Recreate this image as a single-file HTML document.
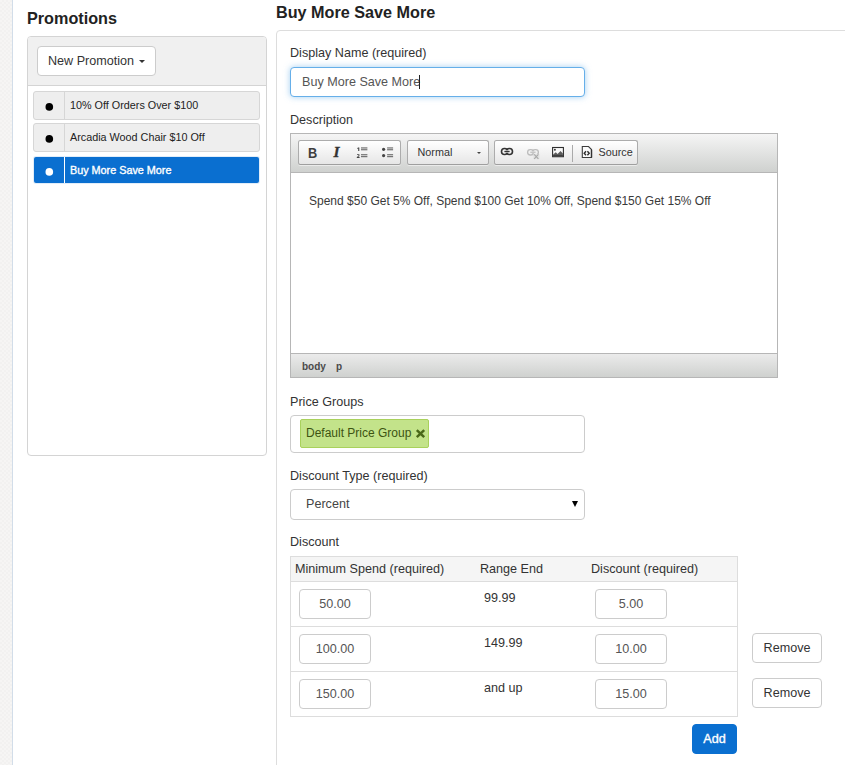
<!DOCTYPE html>
<html>
<head>
<meta charset="utf-8">
<title>Promotions</title>
<style>
*{box-sizing:border-box;margin:0;padding:0}
html,body{width:845px;height:765px;overflow:hidden;background:#fff}
body{font-family:"Liberation Sans",sans-serif;font-size:12.6px;color:#333;position:relative}
.abs{position:absolute}
#strip{left:0;top:0;width:13px;height:765px;background-color:#f6f5f4;background-image:linear-gradient(45deg,#f2f1f0 25%,transparent 25%,transparent 75%,#f2f1f0 75%),linear-gradient(45deg,#f2f1f0 25%,transparent 25%,transparent 75%,#f2f1f0 75%);background-size:4px 4px;background-position:0 0,2px 2px;border-right:1px solid #d2dde9}
h1{position:absolute;font-size:16.2px;font-weight:bold;color:#222;line-height:20px;white-space:nowrap}
#lpanel{left:27px;top:36px;width:240px;height:420px;border:1px solid #d4d4d4;border-radius:4px;background:#fff}
#lhead{left:0;top:0;width:238px;height:49px;background:#f0f0f0;border-bottom:1px solid #d4d4d4;border-radius:3px 3px 0 0}
.btn{position:absolute;border:1px solid #ccc;border-radius:4px;background:#fff;color:#333;font-size:12.6px;text-align:center;white-space:nowrap}
.item{position:absolute;left:33px;width:227px;height:29px;border:1px solid #d6d6d6;border-radius:3px;background:#eee;font-size:10.8px;color:#222}
.item .dot{position:absolute;left:9px;top:9px;fill:#000}
.item .sep{position:absolute;left:30px;top:0;width:1px;height:27px;background:#d6d6d6}
.item .t{position:absolute;left:36px;top:0;line-height:27px;white-space:nowrap}
.item.sel{background:#0a6fd0;border:0;color:#fff;border-radius:2px;left:34px;width:225px;box-shadow:0 0 0 1px rgba(10,111,208,.12)}
.item.sel .dot{fill:#fff}
.item.sel .sep{background:#fff;top:0;height:26px;left:30px}
.item.sel .dot{left:9px;top:9px}
.item.sel .t{left:36px;line-height:27px}
.item.sel .t{-webkit-text-stroke:0.35px #fff}
#rpanel{left:276px;top:30px;width:600px;height:760px;border:1px solid #ddd;border-radius:4px;background:#fff}
.lbl{position:absolute;font-size:12.6px;color:#333;line-height:16px;white-space:nowrap;margin-top:1px}
.inp{position:absolute;border:1px solid #ccc;border-radius:4px;background:#fff;font-size:12.6px;color:#555;white-space:nowrap}
.tg{position:absolute;top:6px;height:25px;border:1px solid #acacac;border-bottom-color:#9f9f9f;border-radius:2.5px;background:linear-gradient(#fff,#e6e6e6);box-shadow:0 1px 0 rgba(255,255,255,.5)}
.num{position:absolute;width:72px;height:30px;border:1px solid #ccc;border-radius:4px;background:#fff;font-size:12.6px;color:#555;text-align:center;line-height:28px}
.hl{position:absolute;left:290px;width:448px;height:1px;background:#ddd}
.rt{position:absolute;left:484px;margin-top:1px;font-size:12.6px;color:#333;line-height:16px;white-space:nowrap}
</style>
</head>
<body>
<div id="strip" class="abs"></div>
<h1 style="left:27px;top:8px">Promotions</h1>
<div id="lpanel" class="abs">
  <div id="lhead" class="abs"></div>
</div>
<div class="btn" style="left:37px;top:46px;width:119px;height:30px;line-height:28px;text-align:left;padding-left:10px">New Promotion<span style="display:inline-block;width:0;height:0;border-left:3px solid transparent;border-right:3px solid transparent;border-top:3px solid #333;vertical-align:middle;margin-left:5px"></span></div>
<div class="item" style="top:91px"><svg class="dot" width="12" height="12" viewBox="0 0 12 12"><circle cx="6.3" cy="5.9" r="3.8"/></svg><span class="sep"></span><span class="t">10% Off Orders Over $100</span></div>
<div class="item" style="top:123px"><svg class="dot" width="12" height="12" viewBox="0 0 12 12"><circle cx="6.3" cy="5.9" r="3.8"/></svg><span class="sep"></span><span class="t">Arcadia Wood Chair $10 Off</span></div>
<div class="item sel" style="top:157px;height:26px"><svg class="dot" width="12" height="12" viewBox="0 0 12 12"><circle cx="6.3" cy="5.9" r="3.8"/></svg><span class="sep"></span><span class="t">Buy More Save More</span></div>

<h1 style="left:276px;top:2px">Buy More Save More</h1>
<div id="rpanel" class="abs"></div>

<div class="lbl" style="left:290px;top:44px">Display Name (required)</div>
<div class="inp" style="left:290px;top:67px;width:295px;height:30px;border-color:#66afe9;box-shadow:0 0 6px rgba(102,175,233,.6);line-height:28px;padding-left:11px">Buy More Save More<span style="display:inline-block;width:1px;height:14px;background:#222;vertical-align:-3px;margin-left:-1px"></span></div>

<div class="lbl" style="left:290px;top:111px">Description</div>

<!-- editor -->
<div class="abs" style="left:290px;top:133px;width:488px;height:245px;border:1px solid #b6b6b6;background:#fff">
  <div class="abs" style="left:0;top:0;width:486px;height:39px;background:linear-gradient(#f5f5f5,#cfd1cf);border-bottom:1px solid #b6b6b6">
    <div class="tg" style="left:7px;width:103px"></div>
    <div class="tg" style="left:116px;width:82px"><span class="abs" style="left:9.5px;top:4px;font-size:10.8px;line-height:14px;color:#333">Normal</span><span class="abs" style="left:69px;top:11px;width:0;height:0;border-left:2px solid transparent;border-right:2px solid transparent;border-top:2px solid #444"></span></div>
    <div class="tg" style="left:203px;width:144px"><span class="abs" style="left:103.5px;top:4px;font-size:10.8px;line-height:14px;color:#333">Source</span></div>
    <span class="abs" id="icB" style="left:17px;top:9px;transform:scaleX(.88);transform-origin:0 0;font-size:14.5px;font-weight:bold;line-height:20px;color:#3e3e3e">B</span>
    <span class="abs" id="icI" style="left:42.5px;top:8px;font-family:'Liberation Serif',serif;font-style:italic;font-weight:bold;font-size:15.5px;line-height:20px;color:#333;-webkit-text-stroke:0.3px #333">I</span>
    <svg class="abs" style="left:0;top:0" width="486" height="40" viewBox="291 134 486 40">
      <!-- ordered list -->
      <g fill="#666">
        <rect x="361" y="147.4" width="6.4" height="1.1"/><rect x="361" y="149.2" width="6.4" height="1.1"/>
        <rect x="361" y="154.2" width="6.4" height="1.1"/><rect x="361" y="156.1" width="6.4" height="1.1"/>
      </g>
      <g fill="#444">
        <path d="M358.2 147.4h1.1v3.5h-1.1v-2.4l-0.9 0.4v-0.8z"/>
        <path d="M357 154.3h2.4v1.9l-1.4 0.9h1.6v0.8h-2.8v-0.9l1.6-1.1v-0.8h-1.4z"/>
      </g>
      <!-- unordered list -->
      <g fill="#666">
        <rect x="387.1" y="147.4" width="6" height="1.1"/><rect x="387.1" y="149.2" width="6" height="1.1"/>
        <rect x="387.1" y="154.2" width="6" height="1.1"/><rect x="387.1" y="156.1" width="6" height="1.1"/>
      </g>
      <circle cx="383.6" cy="149.3" r="1.6" fill="#444"/><circle cx="383.6" cy="155.6" r="1.6" fill="#444"/>
      <!-- link -->
      <g fill="none" stroke="#333" stroke-width="1.6">
        <rect x="501.5" y="148.5" width="6.2" height="6" rx="3"/>
        <rect x="506.3" y="148.5" width="6.2" height="6" rx="3"/>
      </g>
      <rect x="503.6" y="150.3" width="6.8" height="2.4" fill="#e9e9e9"/>
      <rect x="504.4" y="150.9" width="5.2" height="1.2" fill="#333"/>
      <!-- unlink -->
      <g fill="none" stroke="#bdbdbd" stroke-width="1.3">
        <rect x="527.6" y="149.6" width="6" height="5.4" rx="2.7"/>
        <rect x="532.4" y="149.6" width="6" height="5.4" rx="2.7"/>
      </g>
      <rect x="529.8" y="151.3" width="6.4" height="2" fill="#e6e6e6"/>
      <rect x="530.4" y="151.8" width="5" height="1" fill="#bdbdbd"/>
      <rect x="533.4" y="154" width="6" height="5.2" fill="#e1e2e1"/>
      <path d="M534.2 154.4l4.2 4.4M538.4 154.4l-4.2 4.4" stroke="#a8a8a8" stroke-width="1.1" fill="none"/>
      <!-- image -->
      <rect x="552.6" y="147.5" width="10.8" height="9.2" fill="#fafafa" stroke="#2e2e2e" stroke-width="1.1"/>
      <path d="M553.1 156.2v-1.6l2.7-2.4 1.7 1.7 3-3 2.4 2.6v2.7z" fill="#5c5c5c"/>
      <rect x="553.1" y="155.2" width="9.8" height="1.2" fill="#3a3a3a"/>
      <circle cx="554.9" cy="149.7" r="0.95" fill="#333"/>
      <!-- separator -->
      <rect x="572" y="145" width="1" height="17" fill="#aaa"/>
      <!-- source -->
      <path d="M582.3 146.5h6.2l3 3v8h-9.2z" fill="#fbfbfb" stroke="#3c3c3c" stroke-width="1.1"/>
      <path d="M591.5 149.8v7.7" stroke="#333" stroke-width="1.4" fill="none"/>
      <path d="M586 151.2l-1.8 2 1.8 2M587.4 151.2l1.8 2-1.8 2" fill="none" stroke="#2e2e2e" stroke-width="1.4"/>
    </svg>
  </div>
  <div class="abs" style="left:0;bottom:0;width:486px;height:24px;background:linear-gradient(#ebebeb,#cfd1cf);border-top:1px solid #b6b6b6"></div>
  <div class="abs" style="left:18px;top:59px;font-size:12px;color:#3a3a3a;line-height:16px;white-space:nowrap">Spend $50 Get 5% Off, Spend $100 Get 10% Off, Spend $150 Get 15% Off</div>
  <div class="abs" style="left:11px;bottom:3.5px;font-size:10px;font-weight:bold;color:#4a4a4a;line-height:14px;white-space:nowrap">body<span style="margin-left:10px">p</span></div>
</div>

<div class="lbl" style="left:290px;top:393px">Price Groups</div>
<div class="inp" style="left:290px;top:415px;width:295px;height:38px"></div>
<div class="abs" style="left:300px;top:419px;width:129px;height:29px;background:#c3e38a;border:1px solid #a9d15c;border-radius:2px;font-size:12px;line-height:27px;color:#3d5412;padding-left:5px;white-space:nowrap">Default Price Group<svg class="abs" style="left:114px;top:7.5px" width="12" height="12" viewBox="0 0 12 12"><path d="M1.8 2.1l7.4 7M9.2 2.1l-7.4 7" stroke="#4a6819" stroke-width="2.5" fill="none"/></svg></div>

<div class="lbl" style="left:290px;top:467px">Discount Type (required)</div>
<div class="inp" style="left:290px;top:489px;width:295px;height:31px;line-height:29px;padding-left:15px;color:#444">Percent</div>
<div class="abs" style="left:571.8px;top:501px;width:0;height:0;border-left:3.3px solid transparent;border-right:3.3px solid transparent;border-top:6px solid #000"></div>

<div class="lbl" style="left:290px;top:533px">Discount</div>

<!-- table -->
<div class="abs" style="left:290px;top:556px;width:448px;height:161px;border:1px solid #ddd;background:#fff"></div>
<div class="abs" style="left:291px;top:557px;width:446px;height:24px;background:#f5f5f5"></div>
<div class="hl" style="top:581px"></div>
<div class="hl" style="top:626px"></div>
<div class="hl" style="top:671px"></div>
<div class="lbl" style="left:295px;top:560px">Minimum Spend (required)</div>
<div class="lbl" style="left:480px;top:560px">Range End</div>
<div class="lbl" style="left:591px;top:560px">Discount (required)</div>

<div class="num" style="left:299px;top:589px">50.00</div>
<div class="num" style="left:299px;top:634px">100.00</div>
<div class="num" style="left:299px;top:679px">150.00</div>
<div class="num" style="left:595px;top:589px">5.00</div>
<div class="num" style="left:595px;top:634px">10.00</div>
<div class="num" style="left:595px;top:679px">15.00</div>
<div class="rt" style="top:589px">99.99</div>
<div class="rt" style="top:634px">149.99</div>
<div class="rt" style="top:679px">and up</div>

<div class="btn" style="left:752px;top:633px;width:70px;height:30px;line-height:28px">Remove</div>
<div class="btn" style="left:752px;top:678px;width:70px;height:30px;line-height:28px">Remove</div>
<div class="btn" style="left:692px;top:724px;width:45px;height:30px;line-height:28px;background:#0a6fd0;border-color:#0a6fd0;color:#fff;-webkit-text-stroke:0.35px #fff">Add</div>
</body>
</html>
